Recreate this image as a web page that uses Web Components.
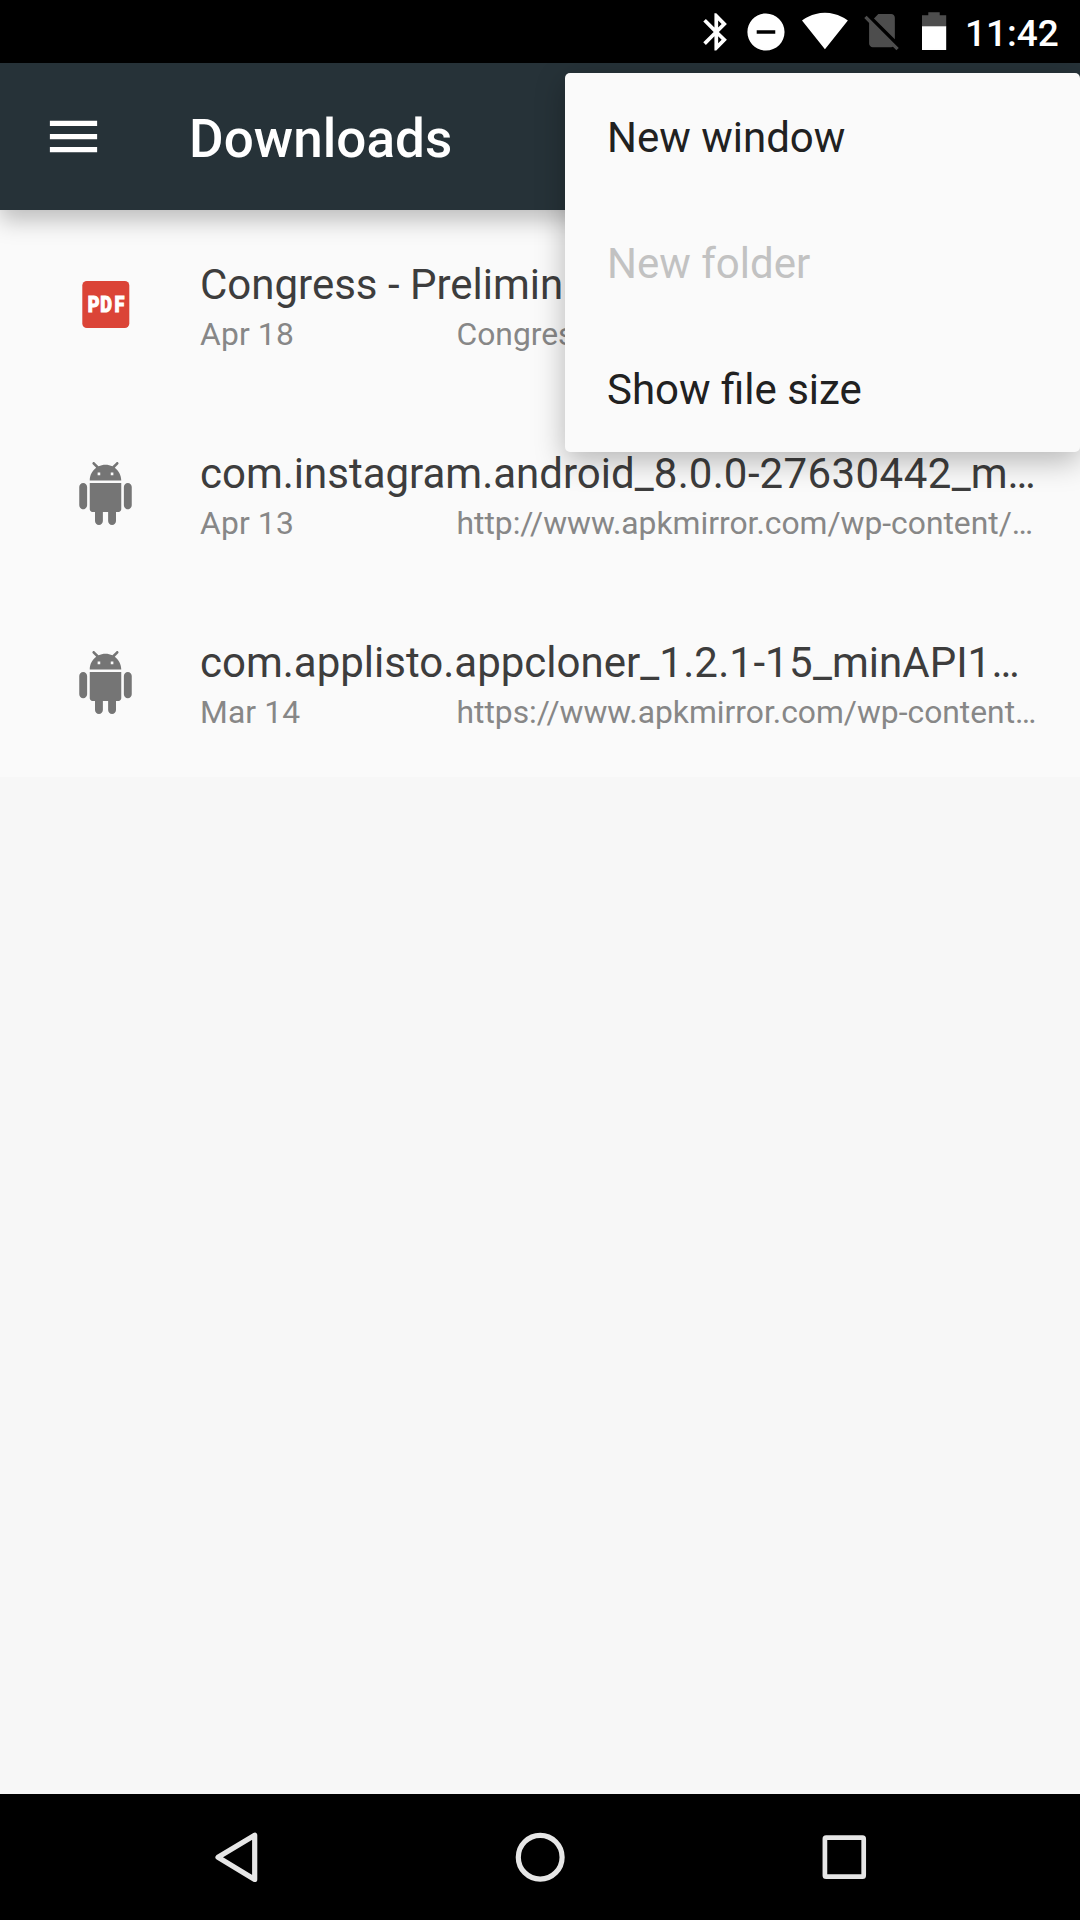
<!DOCTYPE html>
<html lang="en">
<head>
<meta charset="utf-8">
<title>Downloads</title>
<style>
html, body { margin: 0; height: 1920px; overflow: hidden; }
body { font-family: Roboto, "Noto Sans", sans-serif; background: #f7f7f7; }
</style>
</head>
<body>
<files-screen>
  <status-bar slot="status" time="11:42"></status-bar>
  <app-toolbar slot="toolbar">Downloads</app-toolbar>
  <file-row kind="pdf" date="Apr 18" summary="Congress" name="Congress - Preliminary"></file-row>
  <file-row kind="apk" date="Apr 13" summary="http://www.apkmirror.com/wp-content/…" name="com.instagram.android_8.0.0-27630442_m…"></file-row>
  <file-row kind="apk" date="Mar 14" summary="https://www.apkmirror.com/wp-content…" name="com.applisto.appcloner_1.2.1-15_minAPI1…"></file-row>
  <popup-menu slot="menu">
    <menu-entry>New window</menu-entry>
    <menu-entry disabled>New folder</menu-entry>
    <menu-entry>Show file size</menu-entry>
  </popup-menu>
  <nav-bar slot="nav"></nav-bar>
</files-screen>
<script>
const define = (name, render) => customElements.define(name, class extends HTMLElement {
  connectedCallback() {
    if (this.shadowRoot) return;
    this.attachShadow({ mode: 'open' }).innerHTML = render(this);
  }
});

define('files-screen', () => `
<style>
:host { display: flex; flex-direction: column; position: relative; width: 1080px; height: 1920px; background: #f7f7f7; overflow: hidden; }
main { flex: 1; display: flex; flex-direction: column; min-height: 0; }
</style>
<slot name="status"></slot>
<slot name="toolbar"></slot>
<main><slot></slot></main>
<slot name="nav"></slot>
<slot name="menu"></slot>`);

define('status-bar', el => `
<style>
:host { display: flex; justify-content: flex-end; height: 63px; background: #000; color: #fff; }
svg { width: 280px; height: 63px; flex: none; }
time { width: 115px; font-size: 37px; font-weight: 500; line-height: 67px; white-space: nowrap; }
</style>
<svg viewBox="685 0 280 63" fill="#fff">
  <path transform="translate(694 9.6) scale(1.857)" d="M17.71 7.71L12 2h-1v7.59L6.41 5 5 6.41 10.59 12 5 17.59 6.41 19 11 14.41V22h1l5.71-5.71-4.3-4.29 4.3-4.29zM13 5.83l1.88 1.88L13 9.59V5.83zm1.88 10.46L13 18.17v-3.76l1.88 1.88z"/>
  <path transform="translate(743.7 9.7) scale(1.857)" d="M12 2C6.48 2 2 6.48 2 12s4.48 10 10 10 10-4.48 10-10S17.520 2 12 2zm5 11H7v-2h10v2z"/>
  <path transform="translate(801.3 6.8) scale(1.97)" d="M12.01 21.49L23.64 7c-.45-.34-4.93-4-11.64-4C5.280 3 .81 6.660.36 7l11.63 14.490.010.010.010-.010z"/>
  <path fill="#4d4d4d" transform="translate(859.9 8.6) scale(1.84)" d="M18.990 5c0-1.100-.890-2-1.990-2h-7L7.660 5.340 19 16.680 18.990 5zM3.650 3.880L2.380 5.150 5 7.770V19c0 1.100.9 2 2 2h10.010c.350 0 .670-.1.960-.260l1.880 1.880 1.270-1.270L3.650 3.880z"/>
  <path fill="#4d4d4d" d="M922 15.200h6.300v-2.900h11.400v2.900h6.500V27H922z"/>
  <path d="M922 26.300h24.200V50H922z"/>
</svg>
<time>${el.getAttribute('time')}</time>`);

define('app-toolbar', () => `
<style>
:host { display: flex; align-items: center; height: 147px; padding-left: 42px; gap: 84px; background: #263238; color: #fff; position: relative; z-index: 1; box-shadow: 0 10px 22px rgba(0,0,0,.25); }
svg { width: 63px; height: 63px; }
h1 { margin: 0; font-size: 53px; font-weight: 500; line-height: 62px; padding-top: 5px; letter-spacing: .05px; }
</style>
<svg viewBox="0 0 24 24" fill="#fff"><path d="M3 18h18v-2H3v2zm0-5h18v-2H3v2zm0-7v2h18V6H3z"/></svg>
<h1><slot></slot></h1>`);

const fileIcons = {
  pdf: `<svg viewBox="0 0 63 63"><rect x="8.300" y="8" width="47" height="47" rx="4.500" fill="#db4437"/><text transform="scale(.84 1)" x="16.400 31.400 48.200" y="39" font-family="Roboto, sans-serif" font-weight="900" font-size="21.500" fill="#fff" stroke="#fff" stroke-width="1">PDF</text></svg>`,
  apk: `<svg viewBox="0 0 24 24" fill="#757575"><path d="M6 18c0 .55.45 1 1 1h1v3.500c0 .83.67 1.500 1.500 1.500s1.500-.67 1.500-1.500V19h2v3.500c0 .83.67 1.500 1.500 1.500s1.500-.67 1.500-1.500V19h1c.55 0 1-.45 1-1V8H6v10zM3.500 8C2.670 8 2 8.670 2 9.500v7c0 .83.67 1.500 1.500 1.500S5 17.330 5 16.500v-7C5 8.670 4.330 8 3.500 8zm17 0c-.83 0-1.500.67-1.500 1.500v7c0 .83.67 1.500 1.500 1.500s1.500-.67 1.500-1.500v-7c0-.83-.67-1.500-1.500-1.500zm-4.970-5.840l1.300-1.300c.2-.2.2-.51 0-.71-.2-.2-.51-.2-.71 0l-1.480 1.480C13.850 1.230 12.950 1 12 1c-.96 0-1.860.23-2.660.63L7.850.15c-.2-.2-.51-.2-.71 0-.2.2-.2.51 0 .71l1.310 1.310C6.970 3.260 6 5.010 6 7h12c0-1.990-.97-3.750-2.470-4.840zM10 5H9V4h1v1zm5 0h-1V4h1v1z"/></svg>`
};

// Digit runs get slightly wider advances than the surrounding letters.
const widenDigits = text => text.replace(/\d+/g, '<span class="num">$&</span>');

define('file-row', el => `
<style>
:host { display: flex; align-items: center; height: 189px; flex: none; box-sizing: border-box; padding: 0 30px 0 73.5px; gap: 63.5px; background: #fafafa; }
svg { display: block; width: 63px; height: 63px; flex: none; }
.text { flex: 1; min-width: 0; display: flex; flex-direction: column; white-space: nowrap; padding-top: 3px; }
.name { font-size: 42px; line-height: 49px; color: #3d3d3d; }
.num { letter-spacing: .42px; }
.meta { display: flex; font-size: 31.8px; line-height: 37px; color: #878787; padding-top: 7px; }
.date { width: 256.5px; flex: none; letter-spacing: .15px; }
</style>
${fileIcons[el.getAttribute('kind')]}
<div class="text">
  <div class="name">${widenDigits(el.getAttribute('name'))}</div>
  <div class="meta"><span class="date">${el.getAttribute('date')}</span><span>${el.getAttribute('summary')}</span></div>
</div>`);

define('popup-menu', () => `
<style>
:host { display: flex; flex-direction: column; position: absolute; z-index: 2; top: 73px; right: 0; width: 515px; height: 379px; border-radius: 5px; background: #fafafa; box-shadow: 0 9px 30px rgba(0,0,0,.28); }
</style>
<slot></slot>`);

define('menu-entry', () => `
<style>
:host { display: flex; align-items: center; height: 126px; padding: 4px 42px 0; box-sizing: border-box; font-size: 42px; line-height: 50px; color: #212121; white-space: nowrap; }
:host([disabled]) { color: #c2c2c2; }
</style>
<span><slot></slot></span>`);

define('nav-bar', () => `
<style>
:host { display: flex; align-items: center; justify-content: center; gap: 241px; height: 126px; background: #000; }
svg { width: 63px; height: 63px; fill: none; stroke: #e6e6e6; stroke-width: 5.2; stroke-linejoin: round; }
</style>
<svg viewBox="0 0 63 63"><path d="M49.700 9.200V53.500L13 31.350z"/></svg>
<svg viewBox="0 0 63 63"><circle cx="31.200" cy="31.200" r="21.900"/></svg>
<svg viewBox="0 0 63 63"><rect x="11.900" y="11.700" width="38.800" height="39" rx="1.200" stroke-width="4.700"/></svg>`);
</script>
</body>
</html>
